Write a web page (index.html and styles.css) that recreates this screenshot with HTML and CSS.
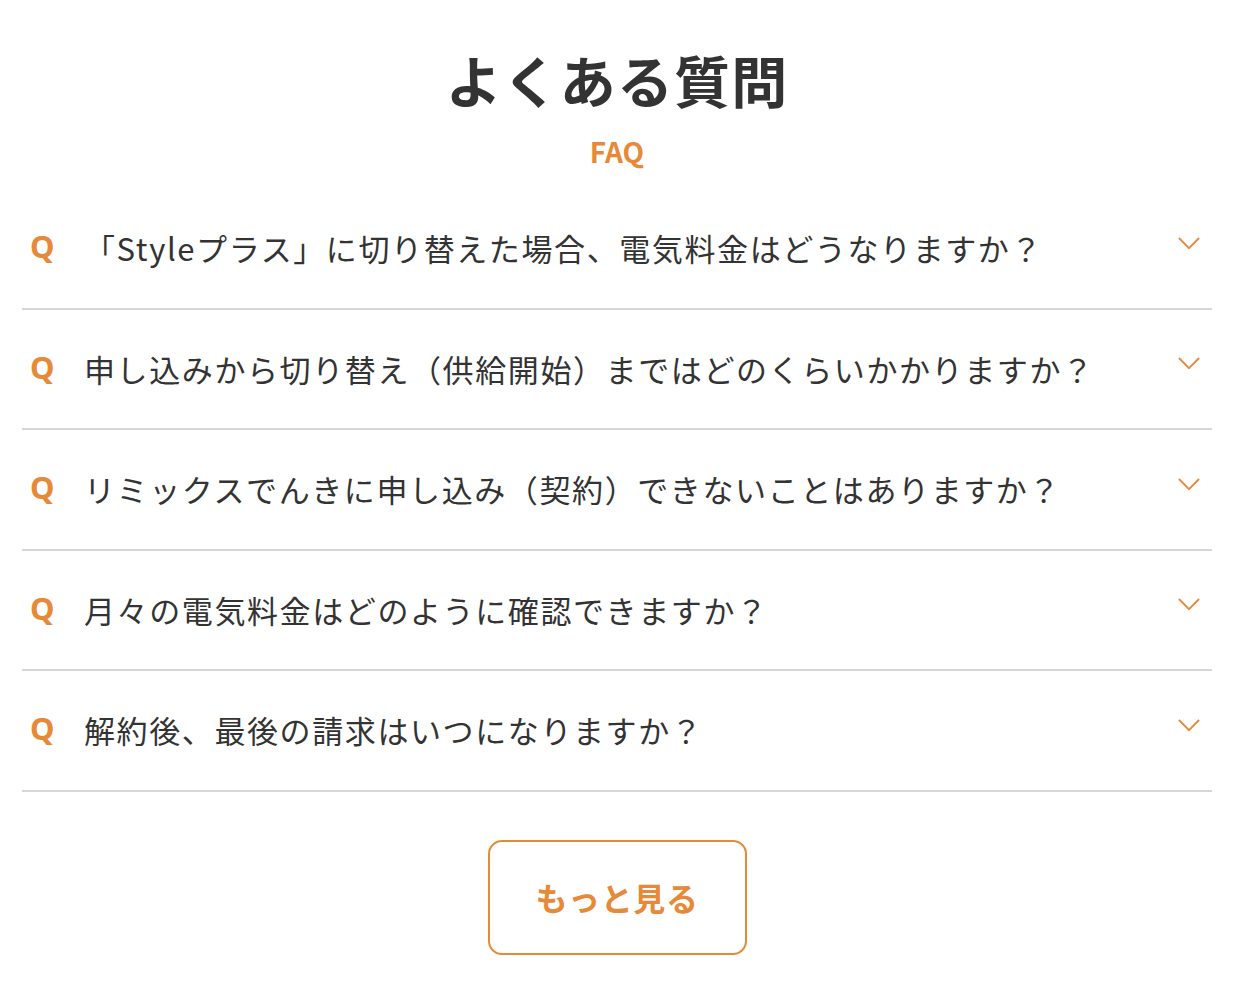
FILE: index.html
```html
<!DOCTYPE html>
<html lang="ja">
<head>
  <meta charset="UTF-8" />
  <title>よくある質問</title>
  <link rel="stylesheet" href="styles.css">
</head>
<body>

<section class="faq">
  <div class="faq-head">
    <h2>よくある質問</h2>
    <p class="faq-sub">FAQ</p>
  </div>

  <ul class="faq-list">
    <li class="faq-item">
      <span class="faq-q">Q</span>
      <span class="faq-text">「Styleプラス」に切り替えた場合、電気料金はどうなりますか？</span>
      <svg class="faq-arrow" viewBox="0 0 24 14"><path d="M1 1l11 11L23 1" /></svg>
    </li>
    <li class="faq-item">
      <span class="faq-q">Q</span>
      <span class="faq-text">申し込みから切り替え（供給開始）まではどのくらいかかりますか？</span>
      <svg class="faq-arrow" viewBox="0 0 24 14"><path d="M1 1l11 11L23 1" /></svg>
    </li>
    <li class="faq-item">
      <span class="faq-q">Q</span>
      <span class="faq-text">リミックスでんきに申し込み（契約）できないことはありますか？</span>
      <svg class="faq-arrow" viewBox="0 0 24 14"><path d="M1 1l11 11L23 1" /></svg>
    </li>
    <li class="faq-item">
      <span class="faq-q">Q</span>
      <span class="faq-text">月々の電気料金はどのように確認できますか？</span>
      <svg class="faq-arrow" viewBox="0 0 24 14"><path d="M1 1l11 11L23 1" /></svg>
    </li>
    <li class="faq-item">
      <span class="faq-q">Q</span>
      <span class="faq-text">解約後、最後の請求はいつになりますか？</span>
      <svg class="faq-arrow" viewBox="0 0 24 14"><path d="M1 1l11 11L23 1" /></svg>
    </li>
  </ul>

  <div class="faq-more">
    <a class="more-btn" href="#">もっと見る</a>
  </div>
</section>

</body>
</html>
```

FILE: styles.css
```css
:root {
  --orange: #e68a3a;
  --text: #333333;
  --line: #d6d6d6;
}

* {
  box-sizing: border-box;
}

body {
  margin: 0;
  background: #ffffff;
  color: var(--text);
  font-family: 'Noto Sans CJK JP', 'Noto Sans', sans-serif;
}

.faq {
  padding: 39px 26px 0 22px;
}

/* Heading */
.faq-head {
  text-align: center;
}

.faq-head h2 {
  margin: 0;
  font-size: 56px;
  font-weight: 700;
  line-height: 80px;
  letter-spacing: 0.02em;
}

.faq-sub {
  margin: 14px 0 0;
  color: var(--orange);
  font-size: 28px;
  font-weight: 700;
  line-height: 36px;
}

/* List */
.faq-list {
  list-style: none;
  margin: 20px 0 0;
  padding: 0;
}

.faq-item {
  display: flex;
  align-items: center;
  height: 120.5px;
  border-bottom: 2px solid var(--line);
  padding: 0 12px 0 8px;
}

.faq-q {
  width: 54px;
  flex-shrink: 0;
  color: var(--orange);
  font-family: 'Noto Sans', sans-serif;
  font-size: 31px;
  font-weight: 700;
  margin-top: -4px;
}

.faq-text {
  flex: 1;
  font-size: 31px;
  letter-spacing: 1.6px;
  line-height: 40px;
}

.faq-arrow {
  width: 22px;
  height: 13px;
  margin-top: -10px;
  fill: none;
  stroke: var(--orange);
  stroke-width: 2;
}

/* Button */
.faq-more {
  display: flex;
  justify-content: center;
  padding: 48px 0 0;
}

.more-btn {
  display: flex;
  justify-content: center;
  align-items: center;
  width: 259px;
  height: 115px;
  border: 2px solid var(--orange);
  border-radius: 14px;
  color: var(--orange);
  font-size: 32px;
  font-weight: 700;
  text-decoration: none;
  letter-spacing: 0.02em;
}
```
